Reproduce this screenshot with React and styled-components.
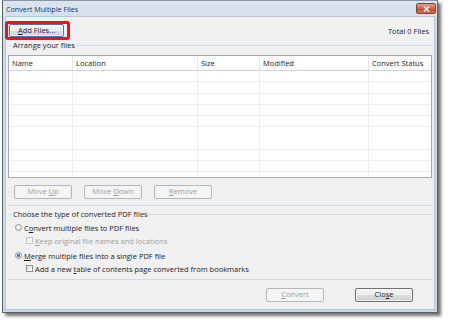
import React from 'react'
import styled, { createGlobalStyle } from 'styled-components'

const GlobalStyle = createGlobalStyle`
  html, body { margin: 0; padding: 0; background: #fff; }
  body {
    font-family: "Open Sans", "Noto Sans", sans-serif;
    font-size: 7.5px;
    color: #1b1b1b;
  }
  #root { width: 450px; height: 324px; }
`

const Window = styled.div`
  margin-left: 2px;
  width: 436px;
  height: 313px;
  box-sizing: border-box;
  border: 1px solid #55616d;
  border-top-color: #8896a4;
  background: linear-gradient(#dae5f0, #ccd9e7 40px, #cad7e4);
  box-shadow: 3px 3px 3px rgba(0, 0, 0, 0.55);
  display: flex;
  flex-direction: column;
`

const TitleBar = styled.div`
  height: 15px;
  display: flex;
  align-items: center;
  justify-content: space-between;
  padding: 0 1px 0 3px;
`

const Title = styled.span`
  font-size: 7.2px;
  color: #1e3550;
`

const CloseBox = styled.div`
  width: 18px;
  height: 9px;
  border: 1px solid #8a3a2c;
  border-radius: 2px;
  background: linear-gradient(#e6a08c, #d0604a 50%, #c0412c 51%, #d6755c);
  display: flex;
  align-items: center;
  justify-content: center;
`

const Client = styled.div`
  flex: 1;
  margin: 0 2px 2px;
  background: #f0f0f0;
  border: 1px solid #b9c5d1;
  display: flex;
  flex-direction: column;
`

const TopRow = styled.div`
  height: 24px;
  box-sizing: border-box;
  display: flex;
  align-items: flex-start;
  justify-content: space-between;
  padding: 7px 5px 0 3px;
`

const Total = styled.span`
  margin-top: 2px;
  color: #1b1b1b;
`

const Group = styled.fieldset`
  margin: ${p => p.$top || 0}px 2px 0;
  padding: 0 0 ${p => p.$bottom || 0}px;
  min-inline-size: 0;
  border: none;
  border-top: 1px solid #d5dbe0;
  border-bottom: 1px solid #d5dbe0;
`

const Legend = styled.legend`
  margin-left: 4px;
  padding: 0 1px;
  line-height: 9px;
  color: #1b1b1b;
`

const Table = styled.div`
  margin-top: 5px;
  height: 123px;
  box-sizing: border-box;
  border: 1px solid #a3a9b0;
  background: #fff;
  display: flex;
  flex-direction: column;
`

const Columns = styled.div`
  display: grid;
  grid-template-columns: 64px 125px 62px 109px 1fr;
`

const HeadRow = styled(Columns)`
  height: 15px;
  box-sizing: border-box;
  border-bottom: 1px solid #d5d5d5;
  background: linear-gradient(#ffffff, #ffffff 60%, #f7f8fa);
`

const HeadCell = styled.div`
  display: flex;
  align-items: center;
  padding-left: 3px;
  border-right: 1px solid ${p => (p.$last ? 'transparent' : '#e3e5e7')};
  color: #1b1b1b;
`

const Body = styled(Columns)`
  flex: 1;
  background: repeating-linear-gradient(
    to bottom,
    transparent 0,
    transparent 10.25px,
    #eeeeee 10.25px,
    #eeeeee 11.25px
  );
`

const BodyCell = styled.div`
  border-right: 1px solid ${p => (p.$last ? 'transparent' : '#efefef')};
`

const ButtonRow = styled.div`
  display: flex;
  gap: 12px;
  margin-top: 7px;
  padding-left: 6px;
`

const Button = styled.button`
  position: relative;
  width: ${p => p.$w || 58}px;
  height: ${p => p.$h || 14}px;
  padding: 0;
  font: inherit;
  font-size: 7.5px;
  line-height: 1;
  border: 1px solid ${p => (p.disabled ? '#b3b7ba' : p.$focus ? '#3d7bad' : '#707070')};
  border-radius: 2px;
  background: ${p =>
    p.disabled
      ? '#f4f4f4'
      : 'linear-gradient(#f4f4f4 0%, #ececec 50%, #dddddd 51%, #d0d0d0 100%)'};
  color: ${p => (p.disabled ? '#a0a0a0' : '#1b1b1b')};
  box-shadow: inset 0 0 0 1px ${p => (p.disabled ? 'transparent' : 'rgba(255,255,255,0.7)')};
`

const Highlight = styled.div`
  position: relative;
  &::after {
    content: '';
    position: absolute;
    left: -4px;
    right: -6px;
    top: -3px;
    bottom: -3px;
    border: 3px solid #e5151c;
    border-radius: 3px;
    pointer-events: none;
  }
`

const Options = styled.div`
  padding: 2px 0 4px 7px;
  display: flex;
  flex-direction: column;
`

const Option = styled.div`
  height: 13px;
  display: flex;
  align-items: center;
  gap: 2px;
  margin-left: ${p => p.$indent || 0}px;
  margin-top: ${p => p.$gap || 0}px;
  color: ${p => (p.$disabled ? '#a0a0a0' : '#1b1b1b')};
`

const Radio = styled.span`
  width: 7px;
  height: 7px;
  box-sizing: border-box;
  border-radius: 50%;
  border: 1px solid #939393;
  background: ${p =>
    p.$checked
      ? 'radial-gradient(circle, #1f6fb8 0, #3d8fd8 1.4px, #e8eef4 2px, #f6f6f6 3px)'
      : 'radial-gradient(circle, #ffffff, #e2e2e2)'};
`

const Check = styled.span`
  width: 7px;
  height: 7px;
  box-sizing: border-box;
  border: 1px solid ${p => (p.$disabled ? '#c6c6c6' : '#8e8f8f')};
  background: ${p => (p.$disabled ? '#f4f4f4' : 'linear-gradient(135deg, #dcdcdc, #ffffff)')};
`

const Key = styled.span`
  text-decoration: underline;
`

const Footer = styled.div`
  display: flex;
  justify-content: flex-end;
  gap: 31px;
  margin-top: 8px;
  padding-right: 21px;
`

const columns = ['Name', 'Location', 'Size', 'Modified', 'Convert Status']

export default function App() {
  return (
    <>
      <GlobalStyle />
      <Window>
        <TitleBar>
          <Title>Convert Multiple Files</Title>
          <CloseBox>
            <svg width="7" height="6" viewBox="0 0 7 6">
              <path d="M1 0.5 L6 5.5 M6 0.5 L1 5.5" stroke="#fff" strokeWidth="1.4" />
            </svg>
          </CloseBox>
        </TitleBar>
        <Client>
          <TopRow>
            <Highlight>
              <Button $w={55} $h={13} $focus>
                <Key>A</Key>dd Files...
              </Button>
            </Highlight>
            <Total>Total 0 Files</Total>
          </TopRow>

          <Group $bottom={6}>
            <Legend>Arrange your files</Legend>
            <Table>
              <HeadRow>
                {columns.map((c, i) => (
                  <HeadCell key={c} $last={i === columns.length - 1}>{c}</HeadCell>
                ))}
              </HeadRow>
              <Body>
                {columns.map((c, i) => (
                  <BodyCell key={c} $last={i === columns.length - 1} />
                ))}
              </Body>
            </Table>
            <ButtonRow>
              <Button disabled>Move <Key>U</Key>p</Button>
              <Button disabled>Move <Key>D</Key>own</Button>
              <Button disabled><Key>R</Key>emove</Button>
            </ButtonRow>
          </Group>

          <Group $top={4}>
            <Legend>Choose the type of converted PDF files</Legend>
            <Options>
              <Option>
                <Radio />
                <span>C<Key>o</Key>nvert multiple files to PDF files</span>
              </Option>
              <Option $indent={11} $disabled>
                <Check $disabled />
                <span><Key>K</Key>eep original file names and locations</span>
              </Option>
              <Option $gap={2}>
                <Radio $checked />
                <span><Key>M</Key>erge multiple files into a single PDF file</span>
              </Option>
              <Option $indent={11}>
                <Check />
                <span>Add a new <Key>t</Key>able of contents page converted from bookmarks</span>
              </Option>
            </Options>
          </Group>

          <Footer>
            <Button disabled><Key>C</Key>onvert</Button>
            <Button>Clo<Key>s</Key>e</Button>
          </Footer>
        </Client>
      </Window>
    </>
  )
}
